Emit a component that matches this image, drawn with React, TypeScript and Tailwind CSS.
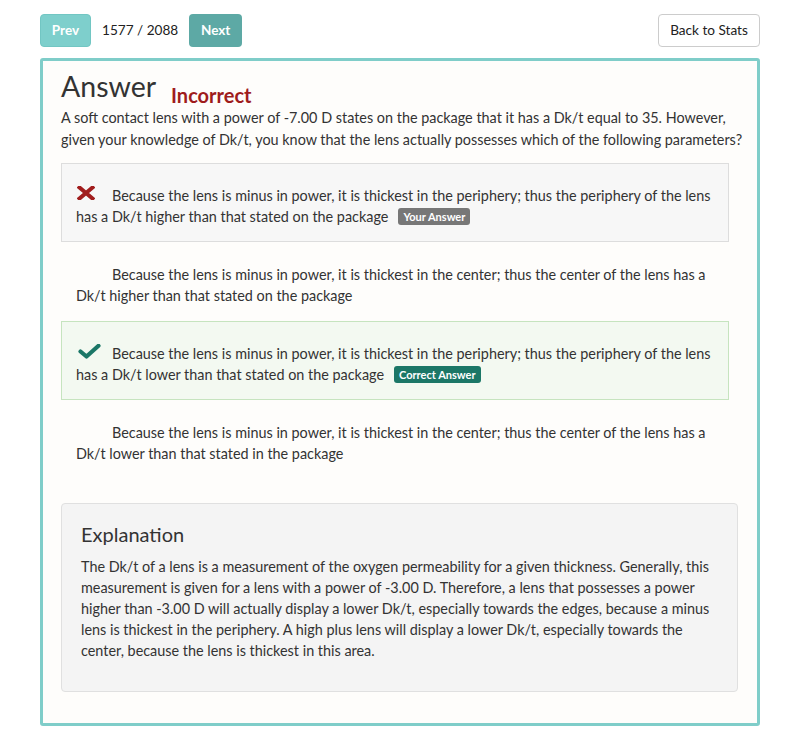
interface Option {
    text: string;
    status: "wrong" | "right" | "none";
}

const options: Option[] = [
    {
        text: "Because the lens is minus in power, it is thickest in the periphery; thus the periphery of the lens has a Dk/t higher than that stated on the package",
        status: "wrong",
    },
    {
        text: "Because the lens is minus in power, it is thickest in the center; thus the center of the lens has a Dk/t higher than that stated on the package",
        status: "none",
    },
    {
        text: "Because the lens is minus in power, it is thickest in the periphery; thus the periphery of the lens has a Dk/t lower than that stated on the package",
        status: "right",
    },
    {
        text: "Because the lens is minus in power, it is thickest in the center; thus the center of the lens has a Dk/t lower than that stated in the package",
        status: "none",
    },
];

function Cross() {
    return (
        <svg width="18" height="14" viewBox="0 0 18 14" className="ml-[1px] block">
            <path d="M2.5 1.5 L15.5 12.5 M15.5 1.5 L2.5 12.5" stroke="#a11d1d" strokeWidth="4" strokeLinecap="square" />
        </svg>
    );
}

function Check() {
    return (
        <svg width="23" height="15" viewBox="0 0 23 15" className="ml-[2px] block">
            <path d="M2.5 7.5 L8.5 12.5 L20.5 1.8" stroke="#1b7767" strokeWidth="4.2" fill="none" strokeLinecap="round" strokeLinejoin="round" />
        </svg>
    );
}

function OptionRow({ option }: { option: Option }) {
    const box =
        option.status === "wrong"
            ? "bg-[#f7f7f7] border-[#dddddd]"
            : option.status === "right"
            ? "bg-[#f3f9f1] border-[#c6e4bf]"
            : "border-transparent";

    return (
        <div className={`mr-[9px] border pl-[14px] pr-[10px] pt-[21px] h-[79px] leading-[21px] ${box}`}>
            <span className="inline-flex h-[21px] w-[36px] items-start pt-[1px] align-top">
                {option.status === "wrong" && <Cross />}
                {option.status === "right" && <Check />}
            </span>
            {option.text}
            {option.status === "wrong" && (
                <span className="ml-[10px] inline-block rounded-[3px] bg-[#777777] px-[5px] text-[11px] font-bold leading-[17px] text-white align-[1px]">
                    Your Answer
                </span>
            )}
            {option.status === "right" && (
                <span className="ml-[10px] inline-block rounded-[3px] bg-[#1b7767] px-[5px] text-[11px] font-bold leading-[17px] text-white align-[1px]">
                    Correct Answer
                </span>
            )}
        </div>
    );
}

export default function App() {
    return (
        <div className="min-h-[750px] bg-white px-[40px] text-[14.4px] text-[#333333] [font-family:Lato,'Liberation_Sans',sans-serif]">
            {/* Nav */}
            <div className="flex items-center justify-between pt-[14px]">
                <div className="flex items-center">
                    <button className="h-[33px] w-[51px] rounded-[4px] border border-[#72c6c3] bg-[#7ecfcc] text-[13.5px] font-bold text-white">
                        Prev
                    </button>
                    <span className="ml-[11px] mr-[11px] text-[13.6px] text-[#222222]">1577 / 2088</span>
                    <button className="h-[33px] w-[53px] rounded-[4px] bg-[#5da9a5] text-[13.5px] font-bold text-white">
                        Next
                    </button>
                </div>
                <button className="h-[33px] w-[102px] rounded-[4px] border border-[#cccccc] bg-white text-[13.6px] text-[#222222]">
                    Back to Stats
                </button>
            </div>

            {/* Card */}
            <div className="mt-[11px] rounded-[3px] border-[3px] border-[#7fcdc9] bg-[#fefdfb] pl-[18px] pr-[19px] pt-[5px] pb-[31px]">
                <div className="flex items-end">
                    <h1 className="text-[28.5px] leading-[40px] text-[#333333]">Answer</h1>
                    <span className="ml-[15px] mb-[-4px] text-[20px] font-bold leading-[30px] text-[#9f1c1c]">Incorrect</span>
                </div>
                <p className="mt-[1px] mr-[-12px] leading-[22px]">
                    A soft contact lens with a power of -7.00 D states on the package that it has a Dk/t equal to 35. However,
                    given your knowledge of Dk/t, you know that the lens actually possesses which of the following parameters?
                </p>

                <div className="mt-[12px]">
                    {options.map((o, i) => (
                        <OptionRow key={i} option={o} />
                    ))}
                </div>

                {/* Explanation */}
                <div className="mt-[24px] h-[189px] rounded-[4px] border border-[#e0e0e0] bg-[#f4f4f4] px-[19px] pt-[16px]">
                    <h2 className="text-[20px] leading-[28px] text-[#333333]">Explanation</h2>
                    <p className="mt-[8px] text-[14.4px] leading-[21px]">
                        The Dk/t of a lens is a measurement of the oxygen permeability for a given thickness. Generally, this
                        measurement is given for a lens with a power of -3.00 D. Therefore, a lens that possesses a power
                        higher than -3.00 D will actually display a lower Dk/t, especially towards the edges, because a minus
                        lens is thickest in the periphery. A high plus lens will display a lower Dk/t, especially towards the
                        center, because the lens is thickest in this area.
                    </p>
                </div>
            </div>
        </div>
    );
}
